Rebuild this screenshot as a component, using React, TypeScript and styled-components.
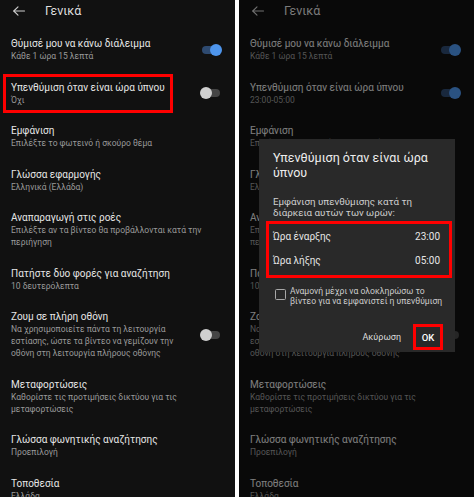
import React from 'react';
import styled, { createGlobalStyle } from 'styled-components';

const Global = createGlobalStyle`
  html, body { margin: 0; padding: 0; background: #ffffff; }
  body { font-family: Roboto, "Noto Sans", "DejaVu Sans", sans-serif; }
  * { box-sizing: border-box; }
`;

const Page = styled.div`
  display: flex;
  gap: 4px;
  width: 474px;
  height: 497px;
  overflow: hidden;
  background: #ffffff;
`;

const Screen = styled.div`
  position: relative;
  flex: none;
  width: 235px;
  height: 497px;
  overflow: hidden;
  background: #111111;
`;

const Header = styled.div`
  display: flex;
  align-items: center;
  gap: 20px;
  height: 22px;
  padding-left: 13px;
  margin-bottom: 6px;
`;

const HeaderTitle = styled.div`
  font-size: 12.5px;
  line-height: 16px;
  color: #dedede;
`;

const Item = styled.div`
  position: relative;
  display: flex;
  align-items: center;
  padding: 9px 13px 9.5px 11px;
`;

const Texts = styled.div`
  flex: 1;
  min-width: 0;
`;

const Title = styled.div`
  font-size: 10px;
  line-height: 13px;
  color: #e6e6e6;
  white-space: nowrap;
`;

const Sub = styled.div`
  font-size: 8.5px;
  line-height: 12px;
  color: #9a9a9a;
  white-space: nowrap;
`;

const ToggleBox = styled.div`
  position: relative;
  flex: none;
  width: 22px;
  height: 12px;
`;

const Track = styled.div<{ $on: boolean }>`
  position: absolute;
  left: 2px;
  top: 2px;
  width: 18px;
  height: 8px;
  border-radius: 4px;
  background: ${(p) => (p.$on ? '#2e4a70' : '#454545')};
`;

const Thumb = styled.div<{ $on: boolean }>`
  position: absolute;
  top: 0;
  left: ${(p) => (p.$on ? '10px' : '0')};
  width: 12px;
  height: 12px;
  border-radius: 50%;
  background: ${(p) => (p.$on ? '#4e95ec' : '#cfcfcf')};
`;

const RedFrame = styled.div`
  position: absolute;
  left: 3px;
  top: 2.5px;
  width: 170px;
  height: 39px;
  border: 3px solid #ff0000;
`;

const Dim = styled.div`
  position: absolute;
  inset: 0;
  background: rgba(0, 0, 0, 0.45);
`;

const Dialog = styled.div`
  position: absolute;
  left: 20px;
  top: 139px;
  width: 196px;
  height: 213px;
  display: flex;
  flex-direction: column;
  padding: 11px 14px 0;
  background: #292929;
`;

const DialogTitle = styled.div`
  font-size: 12.5px;
  line-height: 15px;
  color: #ededed;
  white-space: nowrap;
`;

const DialogBody = styled.div`
  margin-top: 15.5px;
  font-size: 9.8px;
  line-height: 11px;
  color: #cfcfcf;
  white-space: nowrap;
`;

const TimeBox = styled.div`
  margin: 3.5px -11px 0 -7px;
  padding: 0 9px 3px 4px;
  border: 3px solid #ff0000;
`;

const TimeRow = styled.div`
  display: flex;
  align-items: center;
  justify-content: space-between;
  height: 24px;
  font-size: 10px;
  color: #e6e6e6;
`;

const CheckRow = styled.div`
  display: flex;
  align-items: flex-start;
  gap: 4px;
  margin-top: 8px;
  padding-left: 2px;
`;

const CheckBox = styled.div`
  flex: none;
  width: 11px;
  height: 11px;
  margin-top: 3px;
  border: 1.5px solid #a8a8a8;
  border-radius: 1.5px;
`;

const CheckText = styled.div`
  font-size: 8.6px;
  line-height: 10px;
  color: #cccccc;
  white-space: nowrap;
`;

const Actions = styled.div`
  display: flex;
  align-items: center;
  justify-content: flex-end;
  gap: 12px;
  margin: auto -2px 2px 0;
`;

const TextButton = styled.div`
  font-size: 9px;
  color: #dddddd;
`;

const OkButton = styled.div`
  display: flex;
  align-items: center;
  justify-content: center;
  width: 30px;
  height: 26px;
  border: 3px solid #ff0000;
  font-size: 9.5px;
  font-weight: 500;
  color: #ffffff;
`;

const BackArrow = () => (
  <svg width="12" height="10" viewBox="0 0 12 10" fill="none" stroke="#cfcfcf" strokeWidth="1.1" strokeLinecap="round" strokeLinejoin="round">
    <path d="M11.5 5H0.8" />
    <path d="M5 0.8 0.8 5 5 9.2" />
  </svg>
);

const Toggle = ({ on }: { on: boolean }) => (
  <ToggleBox>
    <Track $on={on} />
    <Thumb $on={on} />
  </ToggleBox>
);

type Row = { title: string; sub: string[]; toggle?: boolean; frame?: boolean };

const baseRows = (right: boolean): Row[] => [
  { title: 'Θύμισέ μου να κάνω διάλειμμα', sub: ['Κάθε 1 ώρα 15 λεπτά'], toggle: true },
  {
    title: 'Υπενθύμιση όταν είναι ώρα ύπνου',
    sub: [right ? '23:00-05:00' : 'Όχι'],
    toggle: right,
    frame: !right,
  },
  { title: 'Εμφάνιση', sub: ['Επιλέξτε το φωτεινό ή σκούρο θέμα'] },
  { title: 'Γλώσσα εφαρμογής', sub: ['Ελληνικά (Ελλάδα)'] },
  {
    title: 'Αναπαραγωγή στις ροές',
    sub: ['Επιλέξτε αν τα βίντεο θα προβάλλονται κατά την', 'περιήγηση'],
  },
  { title: 'Πατήστε δύο φορές για αναζήτηση', sub: ['10 δευτερόλεπτα'] },
  {
    title: 'Ζουμ σε πλήρη οθόνη',
    sub: [
      'Να χρησιμοποιείτε πάντα τη λειτουργία',
      'εστίασης, ώστε τα βίντεο να γεμίζουν την',
      'οθόνη στη λειτουργία πλήρους οθόνης',
    ],
    toggle: false,
  },
  {
    title: 'Μεταφορτώσεις',
    sub: ['Καθορίστε τις προτιμήσεις δικτύου για τις', 'μεταφορτώσεις'],
  },
  { title: 'Γλώσσα φωνητικής αναζήτησης', sub: ['Προεπιλογή'] },
  { title: 'Τοποθεσία', sub: ['Ελλάδα'] },
];

const Settings = ({ right }: { right: boolean }) => (
  <>
    <Header>
      <BackArrow />
      <HeaderTitle>Γενικά</HeaderTitle>
    </Header>
    {baseRows(right).map((r) => (
      <Item key={r.title}>
        <Texts>
          <Title>{r.title}</Title>
          {r.sub.map((s) => (
            <Sub key={s}>{s}</Sub>
          ))}
        </Texts>
        {r.toggle !== undefined && <Toggle on={r.toggle} />}
        {r.frame && <RedFrame />}
      </Item>
    ))}
  </>
);

export default function App() {
  return (
    <>
      <Global />
      <Page>
        <Screen>
          <Settings right={false} />
        </Screen>
        <Screen>
          <Settings right={true} />
          <Dim />
          <Dialog>
            <DialogTitle>
              Υπενθύμιση όταν είναι ώρα
              <br />
              ύπνου
            </DialogTitle>
            <DialogBody>
              Εμφάνιση υπενθύμισης κατά τη
              <br />
              διάρκεια αυτών των ωρών:
            </DialogBody>
            <TimeBox>
              <TimeRow>
                <span>Ώρα έναρξης</span>
                <span>23:00</span>
              </TimeRow>
              <TimeRow>
                <span>Ώρα λήξης</span>
                <span>05:00</span>
              </TimeRow>
            </TimeBox>
            <CheckRow>
              <CheckBox />
              <CheckText>
                Αναμονή μέχρι να ολοκληρώσω το
                <br />
                βίντεο για να εμφανιστεί η υπενθύμιση
              </CheckText>
            </CheckRow>
            <Actions>
              <TextButton>Ακύρωση</TextButton>
              <OkButton>OK</OkButton>
            </Actions>
          </Dialog>
        </Screen>
      </Page>
    </>
  );
}
